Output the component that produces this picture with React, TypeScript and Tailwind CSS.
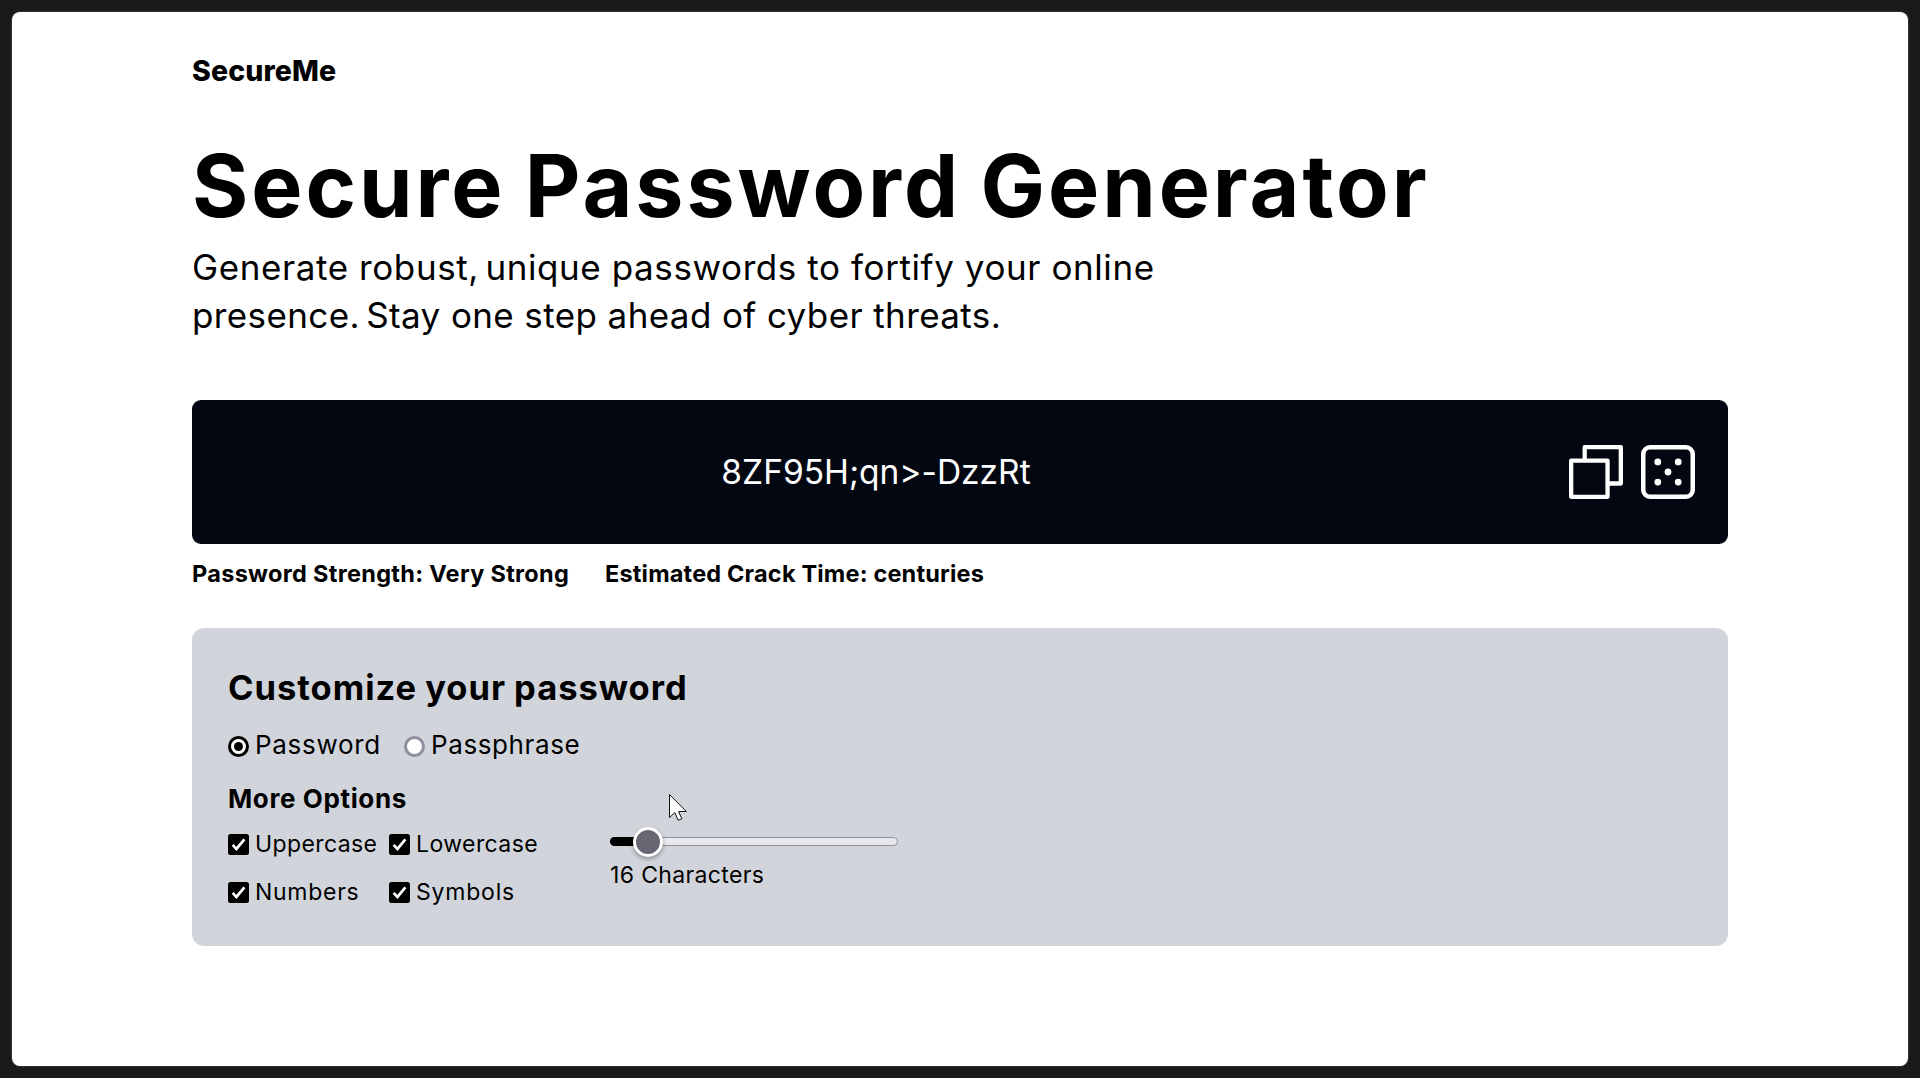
function CopyIcon() {
  return (
    <svg width="54" height="54" viewBox="0 0 54 54" fill="none" stroke="white" strokeWidth="4.3" strokeLinejoin="round">
      <path d="M15.7 15.7V2.15H51.85V38.5H38.5" />
      <rect x="2.15" y="15.7" width="36.4" height="36.15" />
    </svg>
  );
}

function DiceIcon() {
  return (
    <svg width="54" height="54" viewBox="0 0 54 54" fill="none">
      <rect x="2.25" y="2.25" width="49.5" height="49.5" rx="6.75" stroke="white" strokeWidth="4.5" />
      <g fill="white">
        <circle cx="16.8" cy="16.9" r="3.4" />
        <circle cx="37.2" cy="16.9" r="3.4" />
        <circle cx="27" cy="27" r="3.4" />
        <circle cx="16.8" cy="37.1" r="3.4" />
        <circle cx="37.2" cy="37.1" r="3.4" />
      </g>
    </svg>
  );
}

function Checkbox({ label, tracking }: { label: string; tracking: string }) {
  return (
    <label className="flex h-9 items-center">
      <span className="flex size-[21px] shrink-0 items-center justify-center rounded-[2.5px] bg-black">
        <svg width="21" height="21" viewBox="0 0 21 21" fill="none">
          <path d="M4.6 10.9L8.4 14.9L16.4 5.3" stroke="white" strokeWidth="2.7" />
        </svg>
      </span>
      <span className={`ml-[6px] text-[23px] leading-9 ${tracking}`}>{label}</span>
    </label>
  );
}

function Radio({ label, checked, tracking }: { label: string; checked?: boolean; tracking: string }) {
  return (
    <label className="flex h-9 items-center">
      <span
        className={`mt-[2px] flex size-[21px] shrink-0 items-center justify-center rounded-full border-[3px] bg-white ${
          checked ? 'border-black' : 'border-[#8f8f9d]'
        }`}
      >
        {checked && <span className="size-[9px] rounded-full bg-black" />}
      </span>
      <span className={`ml-[6px] text-[26px] leading-9 ${tracking}`}>{label}</span>
    </label>
  );
}

function LengthSlider() {
  return (
    <div className="relative mt-[11px] h-[9px] w-[288px] rounded-full border border-[#8f8f9d] bg-[#e9e9ed]">
      <div className="absolute -top-px -left-px h-[9px] w-[38px] rounded-full bg-black" />
      <div className="absolute -top-[11px] left-[22px] size-[30px] rounded-full border-[3px] border-white bg-[#676774] shadow-[0_2px_4px_rgba(0,0,0,0.35)]" />
    </div>
  );
}

function Cursor() {
  return (
    <svg className="absolute top-[793px] left-[668px]" width="21" height="30" viewBox="0 0 21 30">
      <path
        d="M1.5 1.5V24.5L6.8 19.5L10.2 27.3L13.8 25.8L10.6 18.5H18.3Z"
        fill="white"
        stroke="#111"
        strokeWidth="1"
      />
    </svg>
  );
}

export default function App() {
  return (
    <div className="relative h-[1078px] w-[1920px] overflow-hidden bg-[#1a1a1a] p-3 font-['Inter',sans-serif] text-black">
      <main className="h-[1054px] w-[1896px] rounded-[8px] bg-white px-[180px] pt-[42px] shadow-[0_0_0_1px_#333]">
        <header className="h-[34px] text-[28.5px] leading-[34px] font-extrabold tracking-[0.1px]">SecureMe</header>

        <h1 className="mt-[55px] h-[87px] text-[86px] leading-[86px] font-bold tracking-[2.95px] whitespace-nowrap [word-spacing:-4px]">
          Secure Password Generator
        </h1>
        <p className="mt-[13px] text-[35px] leading-[48px] whitespace-nowrap">
          <span className="block tracking-[0.59px]">
            Generate robust,<span className="-ml-[4px]"> </span>unique passwords to fortify your online
          </span>
          <span className="block tracking-[0.39px]">
            presence.<span className="-ml-[4px]"> </span>Stay one step ahead of cyber threats.
          </span>
        </p>

        <section className="mt-[61px] flex h-36 items-center rounded-[9px] bg-[#030712] pr-[33px] text-white">
          <div className="flex-1 pr-[9px] text-center text-[33.5px] leading-[48px]">
            {'8ZF95H;qn>-DzzRt'}
          </div>
          <div className="flex gap-[18px]">
            <CopyIcon />
            <DiceIcon />
          </div>
        </section>

        <div className="mt-[12px] flex h-9 text-[23.5px] leading-9 font-bold whitespace-nowrap">
          <span className="w-[413px] tracking-[0.3px]">Password Strength: Very Strong</span>
          <span className="tracking-[0.18px]">Estimated Crack Time: centuries</span>
        </div>

        <section className="mt-9 h-[318px] rounded-[12px] bg-[#d1d5db] px-9 pt-9">
          <h2 className="text-[34.5px] leading-[48px] font-bold tracking-[0.98px] [word-spacing:-1px]">
            Customize your password
          </h2>
          <div className="mt-[15px] flex">
            <div className="w-[176px]">
              <Radio label="Password" checked tracking="tracking-[0.7px]" />
            </div>
            <Radio label="Passphrase" tracking="tracking-[0.6px]" />
          </div>
          <h3 className="mt-[18px] text-[26px] leading-9 font-bold tracking-[0.619px]">More Options</h3>
          <div className="mt-[9px] flex">
            <div className="grid w-[382px] grid-cols-[161px_1fr] gap-y-3">
              <Checkbox label="Uppercase" tracking="tracking-[0.4px]" />
              <Checkbox label="Lowercase" tracking="tracking-[0.42px]" />
              <Checkbox label="Numbers" tracking="tracking-[0.72px]" />
              <Checkbox label="Symbols" tracking="tracking-[0.8px]" />
            </div>
            <div>
              <LengthSlider />
              <div className="mt-[11px] text-[23px] leading-9 tracking-[0.36px]">16 Characters</div>
            </div>
          </div>
        </section>
      </main>
      <Cursor />
    </div>
  );
}
